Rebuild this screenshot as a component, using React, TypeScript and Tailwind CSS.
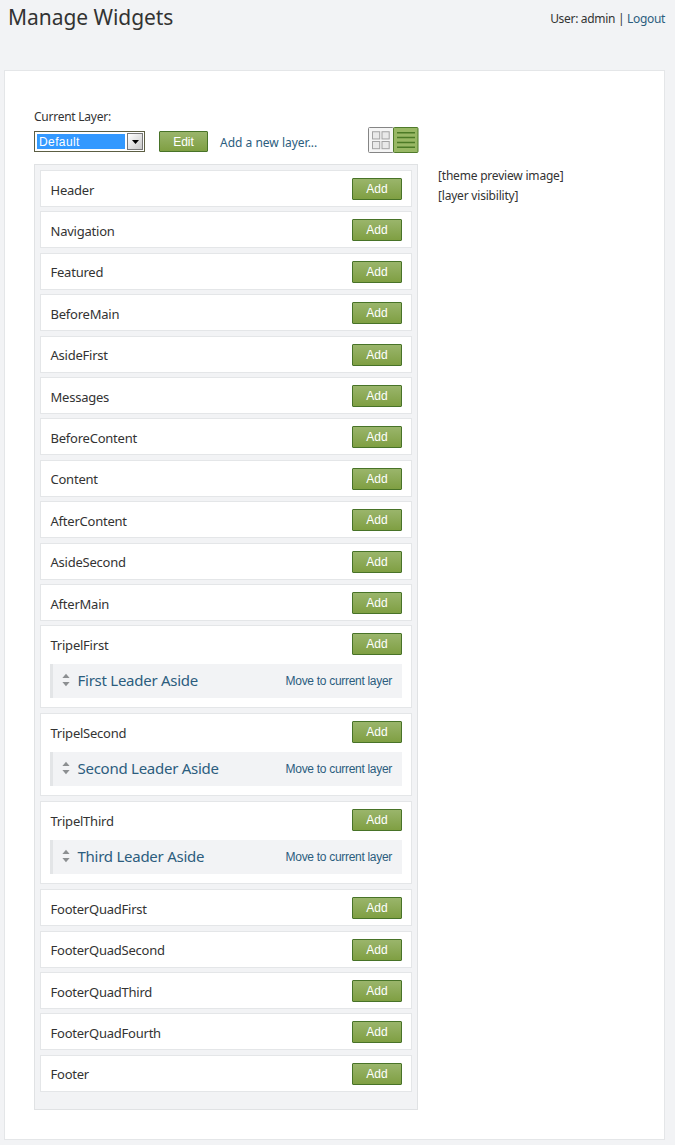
import React from "react";

type Zone = { name: string; widget?: string };

const zones: Zone[] = [
  { name: "Header" },
  { name: "Navigation" },
  { name: "Featured" },
  { name: "BeforeMain" },
  { name: "AsideFirst" },
  { name: "Messages" },
  { name: "BeforeContent" },
  { name: "Content" },
  { name: "AfterContent" },
  { name: "AsideSecond" },
  { name: "AfterMain" },
  { name: "TripelFirst", widget: "First Leader Aside" },
  { name: "TripelSecond", widget: "Second Leader Aside" },
  { name: "TripelThird", widget: "Third Leader Aside" },
  { name: "FooterQuadFirst" },
  { name: "FooterQuadSecond" },
  { name: "FooterQuadThird" },
  { name: "FooterQuadFourth" },
  { name: "Footer" },
];

function GreenButton({ children, className }: { children: React.ReactNode; className: string }) {
  return (
    <button
      className={`shrink-0 rounded-[1px] border border-[#487328] bg-linear-to-b from-[#9ab56b] to-[#7f9f42] text-center font-['Liberation_Sans',sans-serif] text-[12px] leading-[20px] text-white ${className}`}
    >
      {children}
    </button>
  );
}

function SortHandle() {
  return (
    <svg width="8" height="14" viewBox="0 0 8 14" className="-mt-[2px] shrink-0" fill="#8c8f91">
      <path d="M4 0.8 7.6 5H0.4Z" />
      <path d="M4 13.2 7.6 9H0.4Z" />
    </svg>
  );
}

function ZoneCard({ zone }: { zone: Zone }) {
  return (
    <li className={`${zone.widget ? "h-[88px] pb-[5px]" : "h-[41.4px] pb-[4.4px]"}`}>
      <div className="h-full border border-[#e4e6e8] bg-white pl-[9px] pr-[9px] pt-[7px]">
        <div className="flex h-[22px] items-start justify-between">
          <span className="pl-[0.5px] pt-[0.6px] text-[13px] leading-[22px] tracking-[-0.23px]">{zone.name}</span>
          <GreenButton className="h-[22px] w-[50px]">Add</GreenButton>
        </div>
        {zone.widget && (
          <div className="mt-[9px] flex h-[34px] items-center border-l-[3px] border-[#e3e5e7] bg-[#f2f3f5] pl-[9px] pr-[10px] text-[#2c5d7e]">
            <SortHandle />
            <a className="-mt-[2px] ml-[7.5px] text-[15px] leading-[20px] tracking-[-0.26px]">{zone.widget}</a>
            <a className="ml-auto font-['Liberation_Sans',sans-serif] text-[12px] tracking-[-0.3px]">
              Move to current layer
            </a>
          </div>
        )}
      </div>
    </li>
  );
}

function LayerSelect() {
  return (
    <div className="flex h-[21px] w-[111px] border border-[#5c5e43] bg-white p-px font-['Liberation_Sans',sans-serif] text-[12px]">
      <span className="m-px w-[89px] bg-[#3399ff] pl-[2px] leading-[16px] tracking-[0.4px] text-white">Default</span>
      <span className="ml-px flex w-[16px] items-center justify-center border border-[#777] bg-linear-to-br from-white to-[#c9c9c9]">
        <svg width="7" height="4" viewBox="0 0 7 4">
          <path d="M0 0H7L3.5 4Z" fill="#000" />
        </svg>
      </span>
    </div>
  );
}

function ViewSwitch() {
  return (
    <svg width="51" height="26" viewBox="0 0 51 26" fill="none">
      <rect x="0.5" y="0.5" width="25" height="25" rx="1" fill="#f5f5f5" stroke="#858585" />
      <g fill="#e9e9e9" stroke="#a3a3a3">
        <rect x="4.5" y="4.75" width="7.2" height="7.2" />
        <rect x="14" y="4.75" width="7.2" height="7.2" />
        <rect x="4.5" y="14.5" width="7.2" height="7.2" />
        <rect x="14" y="14.5" width="7.2" height="7.2" />
      </g>
      <rect x="25.5" y="0.5" width="24.5" height="25" rx="1" fill="#98b764" stroke="#4f7a2a" />
      <path d="M29 5.7H47M29 10.5H47M29 15.4H47M29 20.3H47" stroke="#4c7a26" strokeWidth="1.5" />
    </svg>
  );
}

export default function App() {
  return (
    <div className="h-[1145px] w-[675px] overflow-hidden bg-[#f2f3f5] font-['Noto_Sans','Open_Sans',sans-serif] text-[#333]">
      <header className="flex h-[70px] items-start justify-between pl-[8px] pr-[10px]">
        <h1 className="pt-[2px] text-[21px] leading-[30px] tracking-[-0.05px]">Manage Widgets</h1>
        <div className="pt-[9px] text-[12px] leading-[20px] tracking-[-0.32px]">
          User: admin | <a className="text-[#2c5d7e]">Logout</a>
        </div>
      </header>
      <main className="ml-[4px] h-[1070px] w-[661px] border border-[#e4e6e8] bg-white pl-[29px] pt-[36px]">
        <div className="h-[20px] text-[12px] leading-[20px] tracking-[-0.25px]">Current Layer:</div>
        <div className="flex w-[385px] items-start">
          <div className="pt-[4px]">
            <LayerSelect />
          </div>
          <GreenButton className="ml-[14px] mt-[4px] h-[21px] w-[49px]">Edit</GreenButton>
          <a className="ml-[12px] mt-[6px] text-[12px] leading-[20px] text-[#2c5d7e]">Add a new layer...</a>
          <div className="ml-auto">
            <ViewSwitch />
          </div>
        </div>
        <div className="mt-[11px] flex items-start">
          <ul className="h-[946px] w-[384px] shrink-0 border border-[#e0e2e4] bg-[#f2f3f5] p-[5px]">
            {zones.map((zone) => (
              <ZoneCard key={zone.name} zone={zone} />
            ))}
          </ul>
          <div className="ml-[20px] mt-[2px] text-[12px] leading-[20px] tracking-[-0.2px]">
            <p>[theme preview image]</p>
            <p>[layer visibility]</p>
          </div>
        </div>
      </main>
    </div>
  );
}
